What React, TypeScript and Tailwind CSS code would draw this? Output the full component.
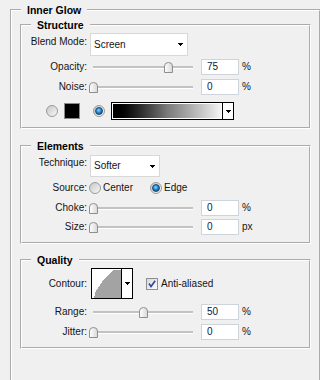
import React from "react";

function Arrow() {
  return (
    <svg width="5" height="3" viewBox="0 0 5 3" shapeRendering="crispEdges">
      <polygon points="0,0 5,0 2.5,3" fill="#000" />
    </svg>
  );
}

function Thumb({ left }: { left: number }) {
  return (
    <svg
      width="9"
      height="11"
      viewBox="0 0 9 11"
      className="absolute top-1/2 -mt-[5px]"
      style={{ left }}
    >
      <defs>
        <linearGradient id="thumbg" x1="0" x2="1" y1="0" y2="0">
          <stop offset="0" stopColor="#ffffff" />
          <stop offset="1" stopColor="#d8d8d8" />
        </linearGradient>
      </defs>
      <path
        d="M0.5 10.5V4Q0.5 0.5 4.5 0.5Q8.5 0.5 8.5 4V10.5Z"
        fill="url(#thumbg)"
        stroke="#8e8e8e"
      />
    </svg>
  );
}

function Radio({ checked }: { checked?: boolean }) {
  return (
    <svg width="12" height="12" viewBox="0 0 12 12" className="shrink-0">
      <defs>
        <linearGradient id="radg" x1="0" y1="0" x2="1" y2="1">
          <stop offset="0" stopColor="#c4c4c4" />
          <stop offset="1" stopColor="#fafafa" />
        </linearGradient>
        <radialGradient id="radb" cx="0.45" cy="0.4" r="0.6">
          <stop offset="0" stopColor="#8fd6ff" />
          <stop offset="0.5" stopColor="#2a8ed4" />
          <stop offset="1" stopColor="#0b4f86" />
        </radialGradient>
      </defs>
      <circle cx="6" cy="6" r="5.5" fill="url(#radg)" stroke="#9a9a9a" />
      {checked && (
        <circle cx="6" cy="6" r="3.5" fill="url(#radb)" stroke="#163e62" strokeWidth="0.8" />
      )}
    </svg>
  );
}

function Checkbox() {
  return (
    <svg width="12" height="12" viewBox="0 0 12 12" className="shrink-0">
      <defs>
        <linearGradient id="chkg" x1="0" y1="0" x2="1" y2="1">
          <stop offset="0" stopColor="#d6d6d6" />
          <stop offset="1" stopColor="#ffffff" />
        </linearGradient>
      </defs>
      <rect x="0.5" y="0.5" width="11" height="11" fill="url(#chkg)" stroke="#8e8e8e" />
      <path d="M3 5.5L5 8.5L9.2 2.8" stroke="#2c4aa6" strokeWidth="1.6" fill="none" />
    </svg>
  );
}

function Label({ children, className = "" }: { children: React.ReactNode; className?: string }) {
  return <div className={"w-[65px] shrink-0 text-right " + className}>{children}</div>;
}

function SliderRow({
  label,
  value,
  unit,
  rowClass,
}: {
  label: string;
  value: number;
  unit: string;
  rowClass: string;
}) {
  return (
    <div className={"flex items-center " + rowClass}>
      <Label>{label}</Label>
      <div className="relative ml-[2px] flex h-full w-[108px] shrink-0 items-center px-[4px]">
        <div className="h-[2px] w-full bg-[#c2c2c2] shadow-[0_1px_0_#ffffff]" />
        <Thumb left={value} />
      </div>
      <div className="ml-[4px] h-[16px] w-[38px] shrink-0 border border-[#cdd4dc] bg-white pl-[5px] leading-[14px] text-[#0c1a3c]">
        {value}
      </div>
      <span className="ml-[3px]">{unit}</span>
    </div>
  );
}

function Select({ text, boxClass }: { text: string; boxClass: string }) {
  return (
    <div
      className={
        "ml-[3px] flex shrink-0 items-center justify-between border border-[#d8d8d8] bg-white pl-[3px] pr-[4px] " +
        boxClass
      }
    >
      <span>{text}</span>
      <Arrow />
    </div>
  );
}

const legendCls = "ml-[9px] px-[6px] text-[10.5px] font-bold leading-[14px] text-black";
const groupCls = "ml-[8px] w-[291px] [border:2px_groove_#ffffff]";

export default function App() {
  return (
    <div className="h-[380px] w-[320px] overflow-hidden bg-[#f0f0f0] font-['Liberation_Sans',Arial,sans-serif] text-[10px] leading-[14px] text-[#141414]">
      <fieldset className="ml-[10px] mt-[3px] w-[311px] pb-[60px] [border:2px_groove_#ffffff]">
        <legend className={legendCls}>Inner Glow</legend>

        <fieldset className={groupCls + " mt-[1px] pb-[7px]"}>
          <legend className={legendCls}>Structure</legend>
          <div className="mt-[1px] flex h-[23px] items-start">
            <Label className="mt-[2px]">Blend Mode:</Label>
            <Select text="Screen" boxClass="h-[23px] w-[98px]" />
          </div>
          <SliderRow label="Opacity:" value={75} unit="%" rowClass="h-[20px] mt-[1px]" />
          <SliderRow label="Noise:" value={0} unit="%" rowClass="h-[20px]" />
          <div className="mt-[5px] flex h-[18px] items-center">
            <div className="ml-[24px]">
              <Radio />
            </div>
            <div className="ml-[6px] h-[16px] w-[16px] shrink-0 border border-[#8a8a8a] bg-black" />
            <div className="ml-[13px]">
              <Radio checked />
            </div>
            <div className="ml-[6px] flex h-[18px] w-[123px] shrink-0 border border-black bg-white">
              <div className="flex-1 p-[1px]">
                <div className="h-full w-full bg-linear-to-r from-black via-[#7a7a7a] to-[#f4f4f4]" />
              </div>
              <div className="flex w-[11px] items-center justify-center border-l border-black">
                <Arrow />
              </div>
            </div>
          </div>
        </fieldset>

        <fieldset className={groupCls + " mt-[10px] pb-[5px]"}>
          <legend className={legendCls}>Elements</legend>
          <div className="mt-[2px] flex h-[22px] items-start">
            <Label className="mt-[1px]">Technique:</Label>
            <Select text="Softer" boxClass="h-[22px] w-[70px]" />
          </div>
          <div className="flex h-[22px] items-center">
            <Label>Source:</Label>
            <div className="ml-[2px]">
              <Radio />
            </div>
            <span className="ml-[2px] w-[47px]">Center</span>
            <Radio checked />
            <span className="ml-[2px]">Edge</span>
          </div>
          <SliderRow label="Choke:" value={0} unit="%" rowClass="h-[18px]" />
          <SliderRow label="Size:" value={0} unit="px" rowClass="h-[20px]" />
        </fieldset>

        <fieldset className={groupCls + " mt-[9px] pb-[5px]"}>
          <legend className={legendCls}>Quality</legend>
          <div className="mt-[1px] flex h-[31px] items-center">
            <Label>Contour:</Label>
            <div className="ml-[4px] flex h-[31px] w-[42px] shrink-0 border border-black bg-white">
              <div className="w-[29px] pl-[2px] pt-[1px]">
                <svg width="27" height="28" viewBox="0 0 27 28" shapeRendering="crispEdges">
                  <polygon
                    points="0,28 1,24 2,21 4,18 6,15 8,12 10,9 12,7 14,5 16,3 18,1 20,0 27,0 27,28"
                    fill="#a3a3a3"
                  />
                </svg>
              </div>
              <div className="flex flex-1 items-center justify-center border-l border-black">
                <Arrow />
              </div>
            </div>
            <div className="ml-[13px]">
              <Checkbox />
            </div>
            <span className="ml-[3px]">Anti-aliased</span>
          </div>
          <SliderRow label="Range:" value={50} unit="%" rowClass="h-[20px] mt-[3px]" />
          <SliderRow label="Jitter:" value={0} unit="%" rowClass="h-[20px]" />
        </fieldset>
      </fieldset>
    </div>
  );
}
